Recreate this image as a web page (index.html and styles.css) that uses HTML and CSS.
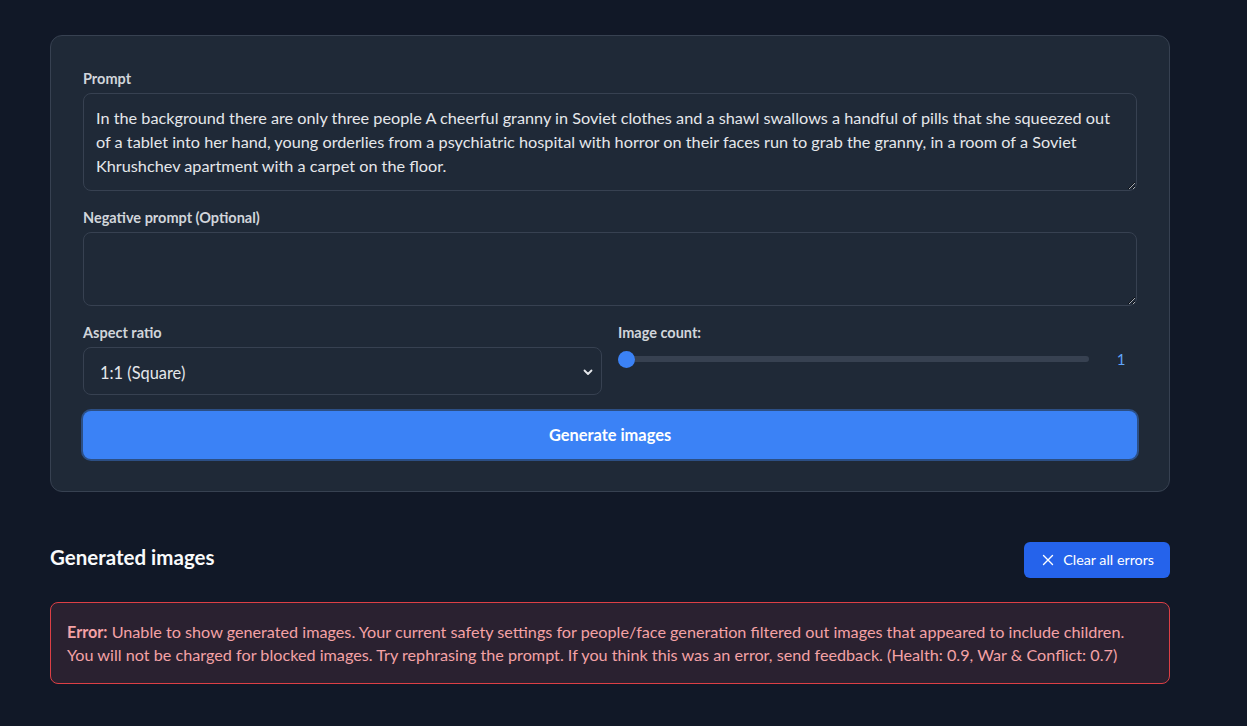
FILE: index.html
```html
<!DOCTYPE html>
<html lang="en">
<head>
<meta charset="utf-8">
<title>Image generation</title>
<link rel="stylesheet" href="styles.css">
</head>
<body>
<main class="page">
  <div class="container">
    <form class="card">
      <div class="field">
        <label class="label" for="prompt">Prompt</label>
        <textarea id="prompt" class="input" rows="3">In the background there are only three people A cheerful granny in Soviet clothes and a shawl swallows a handful of pills that she squeezed out of a tablet into her hand, young orderlies from a psychiatric hospital with horror on their faces run to grab the granny, in a room of a Soviet Khrushchev apartment with a carpet on the floor.</textarea>
      </div>
      <div class="field">
        <label class="label" for="neg">Negative prompt (Optional)</label>
        <textarea id="neg" class="input" rows="2"></textarea>
      </div>
      <div class="grid">
        <div class="col">
          <label class="label" for="ratio">Aspect ratio</label>
          <div class="select-wrap">
            <select id="ratio" class="select">
              <option>1:1 (Square)</option>
              <option>16:9 (Landscape)</option>
              <option>9:16 (Portrait)</option>
            </select>
            <svg class="chev" width="12" height="12" viewBox="0 0 12 12"><path d="M2.5 4.5 6 8 9.5 4.5" fill="none" stroke="#e5e7eb" stroke-width="1.8" stroke-linecap="round" stroke-linejoin="round"/></svg>
          </div>
        </div>
        <div class="col">
          <label class="label" for="count">Image count:</label>
          <div class="range-row">
            <div class="track"><span class="thumb"></span></div>
            <span class="count-val">1</span>
          </div>
        </div>
      </div>
      <button type="button" class="generate">Generate images</button>
    </form>

    <section class="results">
      <div class="results-head">
        <h2 class="results-title">Generated images</h2>
        <button type="button" class="clear-btn">
          <svg width="14" height="14" viewBox="0 0 14 14"><path d="M2.5 2.5l9 9M11.5 2.5l-9 9" stroke="#fff" stroke-width="1.4" stroke-linecap="round"/></svg>
          <span>Clear all errors</span>
        </button>
      </div>
      <p class="error-box"><strong class="error-tag">Error:</strong> Unable to show generated images. Your current safety settings for people/face generation filtered out images that appeared to include children. You will not be charged for blocked images. Try rephrasing the prompt. If you think this was an error, send feedback. (Health: 0.9, War &amp; Conflict: 0.7)</p>
    </section>
  </div>
</main>
</body>
</html>
```

FILE: styles.css
```css
* { box-sizing: border-box; }
html, body { margin: 0; padding: 0; }
body {
  background: #111827;
  color: #f3f4f6;
  font-family: "Lato", "Open Sans", "Liberation Sans", sans-serif;
  font-size: 16px;
  line-height: 1.5;
}
.page {
  padding: 35px 50px 40px 50px;
}
.container {
  width: 1120px;
}
.card {
  background: #1f2937;
  border: 1px solid #374151;
  border-radius: 12px;
  padding: 33px 32px 32px;
  display: flex;
  flex-direction: column;
  gap: 17px;
}
.field { display: flex; flex-direction: column; }
.label {
  display: block;
  font-size: 14.5px;
  line-height: 20px;
  font-weight: 700;
  color: #d1d5db;
  margin-bottom: 4px;
}
.input {
  display: block;
  width: 100%;
  background: #1f2937;
  border: 1px solid #374151;
  border-radius: 8px;
  color: #e5e7eb;
  font: inherit;
  font-size: 16.25px;
  line-height: 24px;
  padding: 12px;
  resize: vertical;
  outline: none;
}
.grid {
  display: grid;
  grid-template-columns: 1fr 1fr;
  gap: 16px;
}
.col { display: flex; flex-direction: column; }
.select-wrap { position: relative; }
.select {
  appearance: none;
  -webkit-appearance: none;
  width: 100%;
  height: 48px;
  background: #1f2937;
  border: 1px solid #374151;
  border-radius: 8px;
  color: #e5e7eb;
  font: inherit;
  font-size: 16.4px;
  padding: 4px 16px 0;
  outline: none;
}
.chev {
  position: absolute;
  right: 8px;
  top: 19px;
  pointer-events: none;
}
.range-row {
  display: flex;
  align-items: center;
  gap: 16px;
  height: 24px;
}
.track {
  position: relative;
  flex: 1;
  height: 6px;
  border-radius: 3px;
  background: #374151;
}
.thumb {
  position: absolute;
  left: 0;
  top: -5px;
  width: 17px;
  height: 17px;
  border-radius: 50%;
  background: #3b82f6;
}
.count-val {
  width: 32px;
  text-align: center;
  color: #60a5fa;
  font-size: 15px;
}
.generate {
  margin-top: -1px;
  height: 48px;
  width: 100%;
  border: none;
  border-radius: 8px;
  background: #3b82f6;
  color: #fff;
  font: inherit;
  font-size: 16.4px;
  font-weight: 700;
  box-shadow: 0 0 0 2px #2c4f85;
  cursor: pointer;
}
.results { margin-top: 50px; }
.results-head {
  display: flex;
  justify-content: space-between;
  align-items: flex-start;
  margin-bottom: 24px;
}
.results-title {
  margin: 1px 0 0;
  font-size: 20.5px;
  line-height: 28px;
  font-weight: 700;
  color: #f9fafb;
}
.clear-btn {
  display: flex;
  align-items: center;
  gap: 8px;
  height: 36px;
  padding: 0 16px 0 17px;
  background: #2563eb;
  color: #fff;
  border: none;
  border-radius: 6px;
  font: inherit;
  font-size: 14.3px;
}
.error-box {
  margin: 0;
  background: #2a2130;
  border: 1px solid #dc3f45;
  border-radius: 8px;
  padding: 17px 16px;
  color: #f4a2a6;
  font-size: 16.2px;
  line-height: 23px;
}
.error-tag { font-weight: 700; }
```
